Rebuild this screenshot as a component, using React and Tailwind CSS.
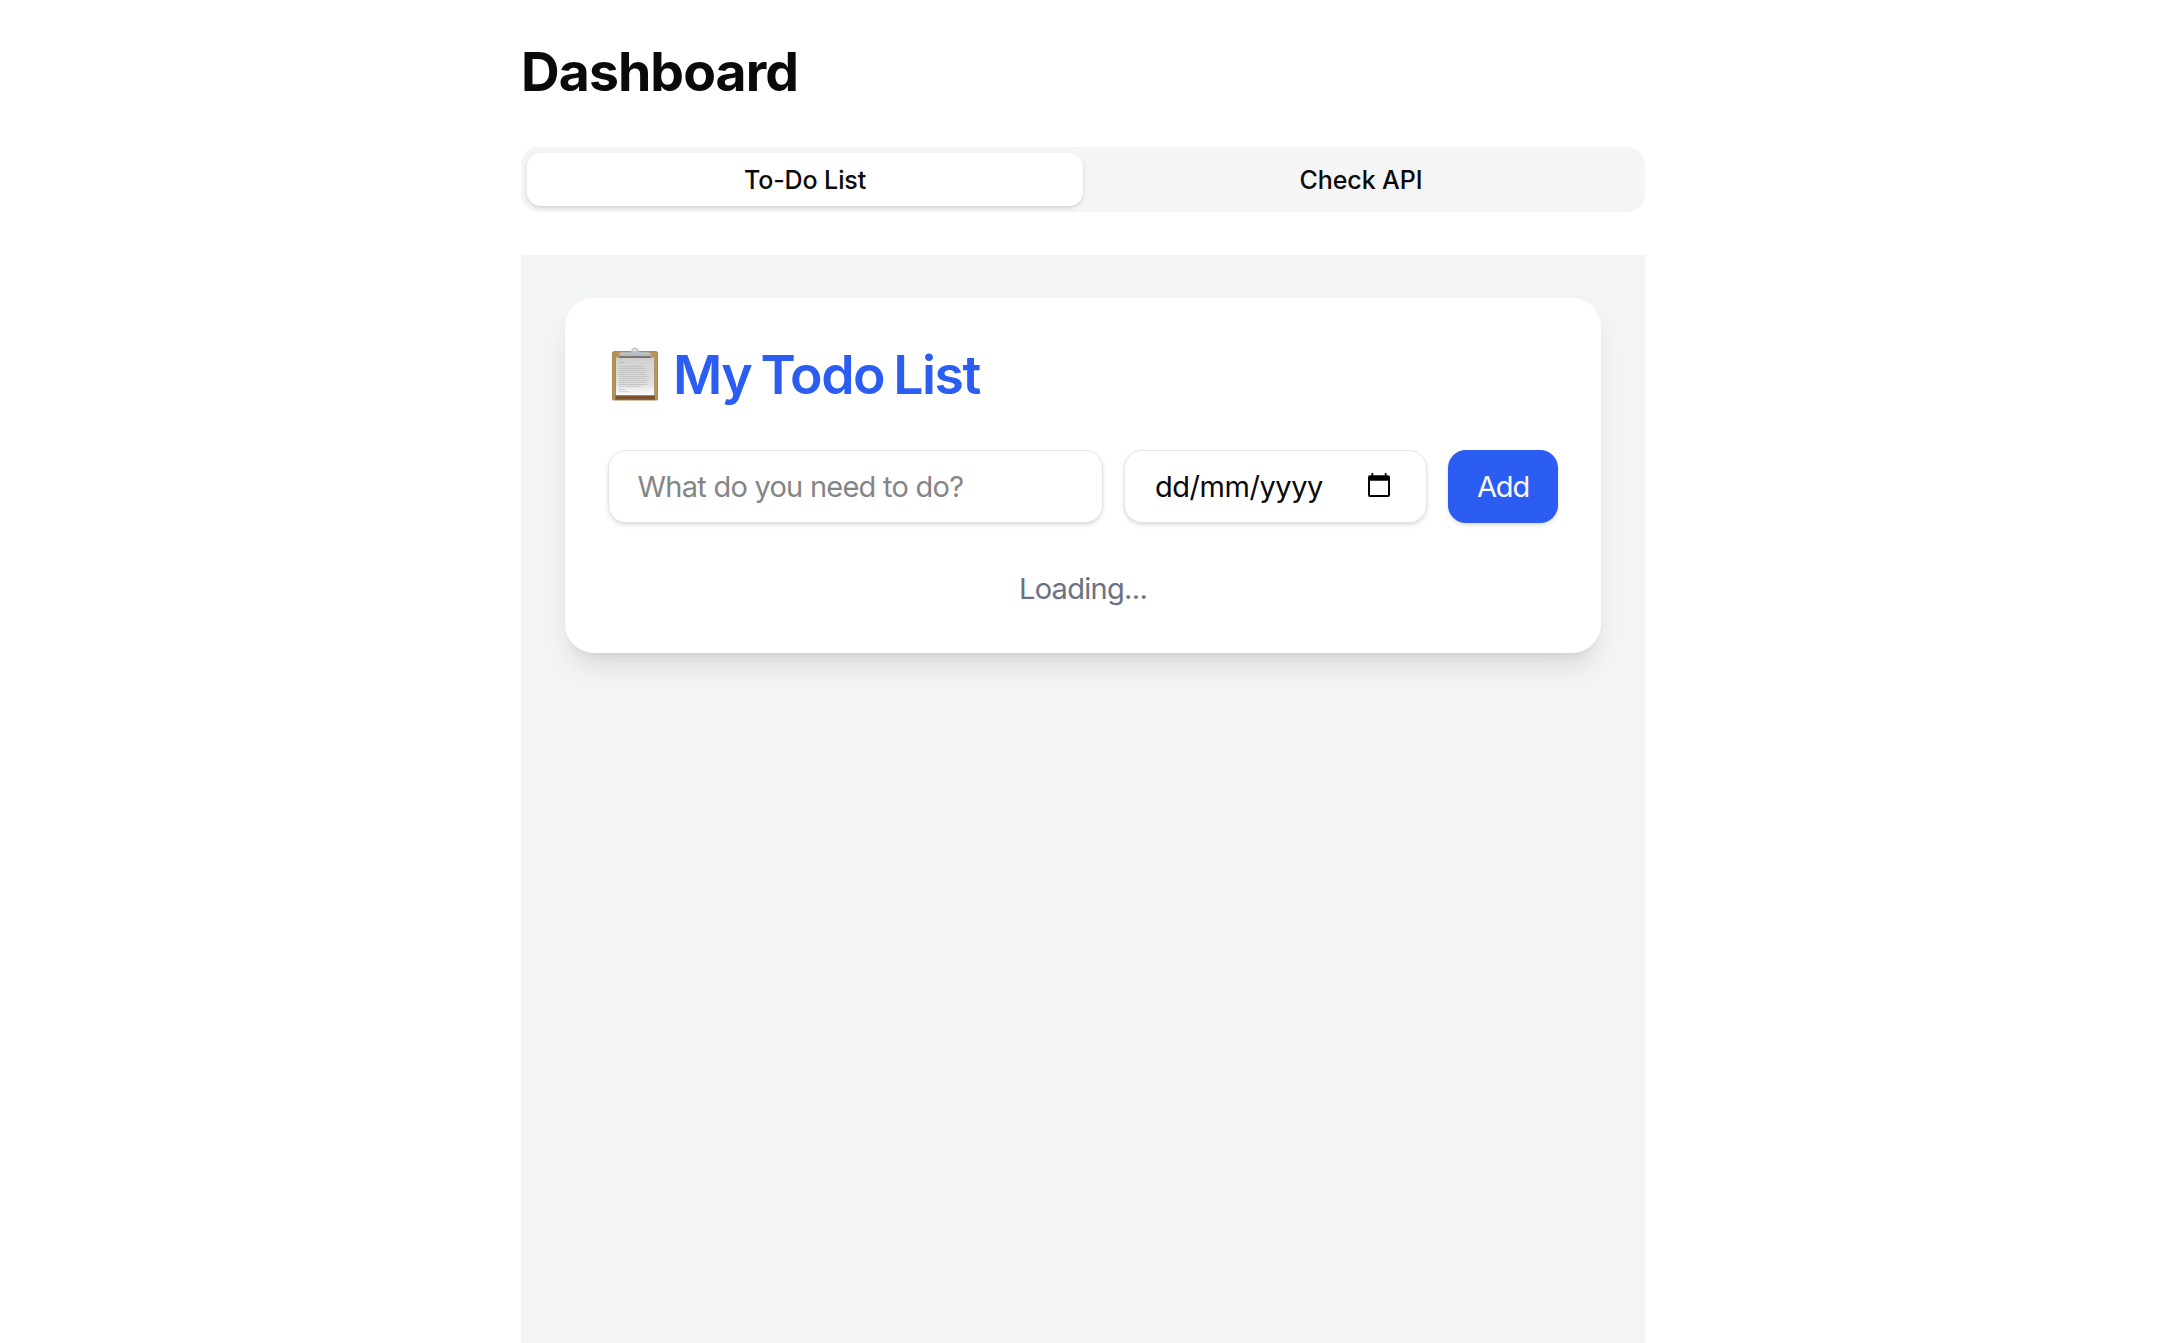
function Clipboard() {
  return (
    <svg viewBox="0 0 46 54" className="-mt-px ml-1 h-[54px] w-[46px] shrink-0" aria-hidden="true">
      <defs>
        <linearGradient id="paper" x1="0" y1="0" x2="0" y2="1">
          <stop offset="0" stopColor="#cfcfcf" />
          <stop offset="0.7" stopColor="#e0e0e0" />
          <stop offset="1" stopColor="#fbfbfb" />
        </linearGradient>
        <linearGradient id="clip" x1="0" y1="0" x2="0" y2="1">
          <stop offset="0" stopColor="#d3d9df" />
          <stop offset="1" stopColor="#adb4bb" />
        </linearGradient>
      </defs>
      <rect x="0" y="4" width="46" height="49.5" rx="2.6" fill="#ab8850" />
      <rect x="1" y="5" width="44" height="47" rx="2" fill="#b8945a" />
      <rect x="3.4" y="48" width="39.4" height="4.600" fill="#7a5230" />
      <rect x="3.4" y="10" width="39.4" height="38.4" fill="#a5834f" />
      <rect x="4" y="10.4" width="38.2" height="37.6" fill="url(#paper)" />
      <rect x="4" y="47" width="38.2" height="1.2" fill="#ffffff" />
      <g stroke="#b8b8b8" strokeWidth="0.9">
        <path d="M7 15.5h6" />
        <path d="M7 19.5h25M7 21.5h27M7 23.5h28M7 25.5h26M7 27.5h28M7 29.5h30M7 31.5h28M7 33.5h30M7 35.5h27M7 37.5h28M7 39.2h22" opacity="0.75" />
        <path d="M7 42.5h6M7 44.7h10" opacity="0.7" />
      </g>
      <rect x="7" y="9.2" width="32" height="1.6" fill="#685f55" />
      <path d="M7 9.3V8.2C7 6 8.3 5.2 10.2 5.2H17.2C19.5 5.2 18.8 0.5 23 0.5S26.500 5.200 28.800 5.200H35.800C37.700 5.200 39 6 39 8.200V9.300Z" fill="url(#clip)" />
      <path d="M17 4.8h3.200M25.800 4.800H29" stroke="#83a7cc" strokeWidth="1.2" />
      <circle cx="23" cy="3.300" r="1.500" fill="#ffffff" stroke="#9aa1a8" strokeWidth="0.6" />
    </svg>
  );
}

function CalendarIcon() {
  return (
    <svg viewBox="0 0 22 24" className="-mt-1 h-6 w-[22px]" aria-hidden="true">
      <path
        fillRule="evenodd"
        fill="#000"
        d="M3.500 0H5.200V2.200H16.800V0H18.500V2.200H20A2 2 0 0 1 22 4.200V22A2 2 0 0 1 20 24H2A2 2 0 0 1 0 22V4.200A2 2 0 0 1 2 2.200H3.500ZM2 7.800V22H20V7.800Z"
      />
    </svg>
  );
}

const fieldShadow = "shadow-[0_2px_5.5px_rgba(0,0,0,0.1),0_2px_4px_-2px_rgba(0,0,0,0.1)]";

export default function App() {
  return (
    <div className="h-[1343px] overflow-hidden bg-white font-[Inter,sans-serif] text-[#0a0a0a]">
      <main className="ml-[521px] flex h-full w-[1124px] flex-col pt-11">
        <h1 className="text-[53.5px] leading-[55px] font-bold tracking-[-0.9px]">Dashboard</h1>

        <div role="tablist" className="mt-12 grid h-[65px] shrink-0 grid-cols-2 rounded-[18px] bg-[#f5f5f5] p-1.5">
          <button
            role="tab"
            aria-selected="true"
            className={`rounded-[14px] bg-white pt-0.5 text-[25px] font-medium tracking-[-0.1px] ${fieldShadow}`}
          >
            To-Do List
          </button>
          <button
            role="tab"
            aria-selected="false"
            className="rounded-[14px] pt-0.5 text-[25px] font-medium tracking-[-0.1px]"
          >
            Check API
          </button>
        </div>

        <section className="mt-[43px] flex-1 bg-gray-100 px-11 pt-[43px]">
          <div className="rounded-[29px] bg-white p-[43px] shadow-[0_18px_27px_-5.5px_rgba(0,0,0,0.1),0_7px_11px_-7px_rgba(0,0,0,0.1)]">
            <h2 className="flex h-[66px] items-center text-[53.5px] leading-[64px] font-semibold tracking-[-1.5px] text-[#2b5df3]">
              <Clipboard />
              <span className="ml-[15px] pt-0.5 [word-spacing:-2.8px]">My Todo List</span>
            </h2>

            <form className="mt-[43px] flex h-[73px] gap-[21.5px] text-[29px]">
              <input
                type="text"
                placeholder="What do you need to do?"
                className={`min-w-0 flex-1 rounded-[18px] border border-[#e5e5e5] bg-white px-[28.5px] tracking-[-0.75px] placeholder:text-[#858585] ${fieldShadow}`}
              />
              <div
                className={`flex w-[302.500px] items-center justify-between rounded-[18px] border border-[#e5e5e5] bg-white pr-9 pl-[30px] tracking-[-0.45px] ${fieldShadow}`}
              >
                <span>dd/mm/yyyy</span>
                <CalendarIcon />
              </div>
              <button
                type="button"
                className={`w-[110px] rounded-[18px] bg-[#2b5df3] tracking-[-1.2px] text-[#fafafa] ${fieldShadow}`}
              >
                Add
              </button>
            </form>

            <p className="mt-11 text-center text-[29px] leading-[43px] tracking-[-0.7px] text-[#6a7282]">Loading...</p>
          </div>
        </section>
      </main>
    </div>
  );
}
